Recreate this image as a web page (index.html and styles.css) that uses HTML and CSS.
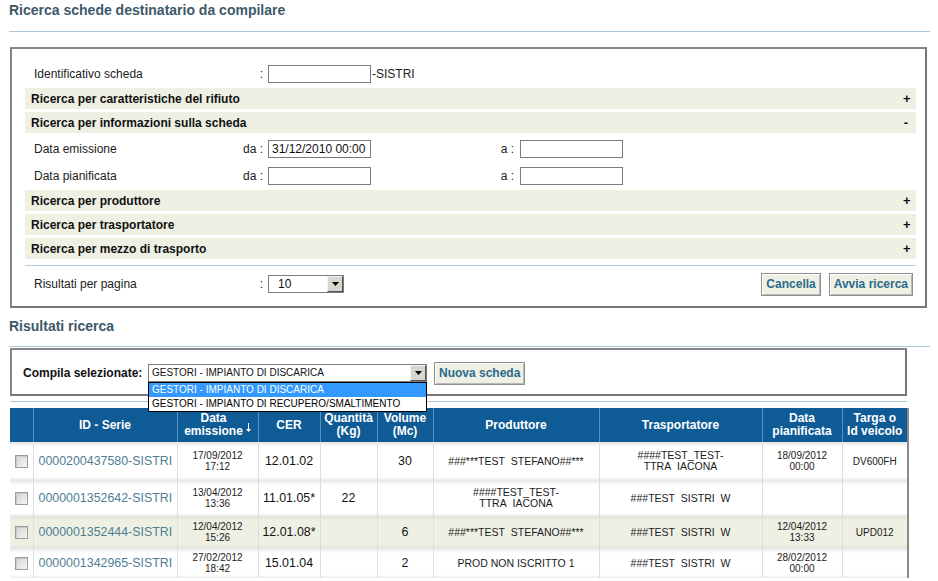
FILE: index.html
```html
<!DOCTYPE html>
<html lang="it">
<head>
<meta charset="utf-8">
<title>Ricerca schede destinatario da compilare</title>
<link rel="stylesheet" href="styles.css">
</head>
<body>
<div class="page">
  <h1 class="title">Ricerca schede destinatario da compilare</h1>
  <div class="rule rule-top"></div>

  <div class="formbox">
    <div class="row row-id">
      <span class="lbl">Identificativo scheda</span><span class="sep">:</span><span class="input"></span><span class="suffix">-SISTRI</span>
    </div>
    <div class="bar"><span>Ricerca per caratteristiche del rifiuto</span><span class="tog">+</span></div>
    <div class="bar"><span>Ricerca per informazioni sulla scheda</span><span class="tog">-</span></div>
    <div class="row row-date first">
      <span class="lbl">Data emissione</span><span class="sep">da :</span><span class="input">31/12/2010 00:00</span><span class="sep sep-a">a :</span><span class="input"></span>
    </div>
    <div class="row row-date">
      <span class="lbl">Data pianificata</span><span class="sep">da :</span><span class="input"></span><span class="sep sep-a">a :</span><span class="input"></span>
    </div>
    <div class="bar"><span>Ricerca per produttore</span><span class="tog">+</span></div>
    <div class="bar"><span>Ricerca per trasportatore</span><span class="tog">+</span></div>
    <div class="bar"><span>Ricerca per mezzo di trasporto</span><span class="tog">+</span></div>
    <div class="divider"></div>
    <div class="row row-bottom">
      <span class="lbl">Risultati per pagina</span><span class="sep">:</span>
      <span class="select select-small"><span class="sel-text">10</span><span class="sel-arrow"><svg width="7" height="4" viewBox="0 0 7 4"><path d="M0 0h7L3.5 4z" fill="#000"/></svg></span></span>
      <span class="buttons"><span class="btn">Cancella</span><span class="btn">Avvia ricerca</span></span>
    </div>
  </div>

  <h2 class="title title-results">Risultati ricerca</h2>
  <div class="rule rule-results"></div>

  <div class="compilebox">
    <span class="compile-lbl">Compila selezionate:</span>
    <span class="select select-wide">
      <span class="sel-text">GESTORI - IMPIANTO DI DISCARICA</span>
      <span class="sel-arrow"><svg width="7" height="4" viewBox="0 0 7 4"><path d="M0 0h7L3.5 4z" fill="#000"/></svg></span>
      <span class="dropdown">
        <span class="opt opt-active">GESTORI - IMPIANTO DI DISCARICA</span>
        <span class="opt">GESTORI - IMPIANTO DI RECUPERO/SMALTIMENTO</span>
      </span>
    </span>
    <span class="btn btn-new">Nuova scheda</span>
  </div>
  <div class="rule rule-table"></div>

  <div class="tablewrap">
    <table class="results">
      <colgroup>
        <col class="c-chk"><col class="c-id"><col class="c-de"><col class="c-cer"><col class="c-q"><col class="c-v"><col class="c-prod"><col class="c-tr"><col class="c-dp"><col class="c-tg">
      </colgroup>
      <thead>
        <tr>
          <th></th>
          <th>ID - Serie</th>
          <th><span class="sorted">Data<br>emissione</span><svg class="sort-ico" width="5" height="9" viewBox="0 0 5 9"><path d="M2 0h1v6h2L2.5 9 0 6h2z" fill="#fff"/></svg></th>
          <th>CER</th>
          <th>Quantità<br>(Kg)</th>
          <th>Volume<br>(Mc)</th>
          <th>Produttore</th>
          <th>Trasportatore</th>
          <th>Data<br>pianificata</th>
          <th>Targa o<br>Id veicolo</th>
        </tr>
      </thead>
      <tbody>
        <tr class="r1">
          <td><span class="chk"></span></td>
          <td class="id">0000200437580-SISTRI</td>
          <td class="small">17/09/2012<br>17:12</td>
          <td class="big">12.01.02</td>
          <td class="big"></td>
          <td class="big">30</td>
          <td class="small wide">###***TEST&nbsp; STEFANO##***</td>
          <td class="small wide">####TEST_TEST-<br>TTRA&nbsp; IACONA</td>
          <td class="small">18/09/2012<br>00:00</td>
          <td class="small">DV600FH</td>
        </tr>
        <tr class="r2">
          <td><span class="chk"></span></td>
          <td class="id">0000001352642-SISTRI</td>
          <td class="small">13/04/2012<br>13:36</td>
          <td class="big">11.01.05*</td>
          <td class="big">22</td>
          <td class="big"></td>
          <td class="small wide">####TEST_TEST-<br>TTRA&nbsp; IACONA</td>
          <td class="small wide">###TEST&nbsp; SISTRI&nbsp; W</td>
          <td class="small"></td>
          <td class="small"></td>
        </tr>
        <tr class="r3 hl">
          <td><span class="chk"></span></td>
          <td class="id">0000001352444-SISTRI</td>
          <td class="small">12/04/2012<br>15:26</td>
          <td class="big">12.01.08*</td>
          <td class="big"></td>
          <td class="big">6</td>
          <td class="small wide">###***TEST&nbsp; STEFANO##***</td>
          <td class="small wide">###TEST&nbsp; SISTRI&nbsp; W</td>
          <td class="small">12/04/2012<br>13:33</td>
          <td class="small">UPD012</td>
        </tr>
        <tr class="r4">
          <td><span class="chk"></span></td>
          <td class="id">0000001342965-SISTRI</td>
          <td class="small">27/02/2012<br>18:42</td>
          <td class="big">15.01.04</td>
          <td class="big"></td>
          <td class="big">2</td>
          <td class="small wide">PROD NON ISCRITTO 1</td>
          <td class="small wide">###TEST&nbsp; SISTRI&nbsp; W</td>
          <td class="small">28/02/2012<br>00:00</td>
          <td class="small"></td>
        </tr>
      </tbody>
    </table>
  </div>
</div>
</body>
</html>
```

FILE: styles.css
```css
* { box-sizing: border-box; }

html, body {
  margin: 0;
  background: #fff;
}

body {
  font-family: "Liberation Sans", Arial, sans-serif;
  font-size: 12px;
  color: #222;
  overflow: hidden;
}

.page {
  width: 938px;
  padding: 2px 0 0 9px;
}

.title {
  margin: 0;
  font-size: 14px;
  line-height: 17px;
  font-weight: bold;
  color: #3d5969;
}

.rule {
  height: 1px;
  background: #a9c8d6;
  width: 921px;
}

.rule-top { margin-top: 12px; }

/* ---------- search form ---------- */
.formbox {
  margin: 15px 0 0 1px;
  width: 917px;
  border: 2px solid #858585;
  border-right-color: #777;
  border-bottom-color: #777;
  padding: 12px 9px 4px 13px;
}

.row {
  display: flex;
  align-items: center;
  padding-left: 9px;
}

.row-id { height: 24px; padding-top: 2px; }

.row-date { height: 27px; }
.row-date.first { margin-top: 2px; }

.lbl {
  width: 196px;
  flex: none;
}

.sep {
  width: 33px;
  flex: none;
  text-align: right;
  margin-right: 5px;
}

.sep-a {
  width: 143px;
  margin-right: 6px;
}

.input {
  width: 103px;
  height: 18px;
  flex: none;
  border: 1px solid #7b7b7b;
  background: #fff;
  padding: 0 0 0 3px;
  line-height: 16px;
  font-size: 12px;
  color: #111;
}

.suffix { margin-left: 1px; }

.bar {
  height: 21px;
  margin-top: 3px;
  background: #eef0e4;
  display: flex;
  align-items: center;
  justify-content: space-between;
  padding: 0 7px 0 6px;
  font-weight: bold;
  color: #111;
}

.row-date + .bar { margin-top: 1px; }

.tog {
  font-size: 13px;
  font-weight: bold;
  width: 6px;
  text-align: center;
}

.divider {
  margin-top: 6px;
  height: 1px;
  background: #b3cdd9;
}

.row-bottom { height: 36px; }

.select {
  position: relative;
  display: flex;
  align-items: center;
  height: 18px;
  border: 1px solid #7b7b7b;
  background: #fff;
  flex: none;
}

.select-small { width: 76px; }

.sel-text {
  flex: 1;
  padding-left: 9px;
  font-size: 12px;
  line-height: 16px;
  color: #111;
}

.sel-arrow {
  width: 16px;
  height: 16px;
  background: #d8d6ce;
  border-top: 1px solid #f4f4f4;
  border-left: 1px solid #f4f4f4;
  border-right: 1px solid #555;
  border-bottom: 1px solid #555;
  display: flex;
  align-items: center;
  justify-content: center;
}

.buttons {
  margin-left: auto;
  display: flex;
  gap: 8px;
  margin-right: 3px;
}

.btn {
  display: inline-flex;
  align-items: center;
  justify-content: center;
  height: 23px;
  padding: 0 4px;
  white-space: nowrap;
  background: #eef0e4;
  border: 1px solid #8f8f8f;
  box-shadow: inset 1px 1px 0 #fff, inset -1px -1px 0 #b9b9b9;
  color: #2b6a8a;
  font-weight: bold;
  font-size: 12px;
}

/* ---------- results ---------- */
.title-results { margin-top: 10px; }

.rule-results { margin-top: 11px; }

.compilebox {
  position: relative;
  z-index: 2;
  margin: 1px 0 0 1px;
  width: 897px;
  height: 48px;
  border: 2px solid #858585;
  border-right-color: #777;
  border-bottom-color: #777;
  display: flex;
  align-items: center;
  padding: 2px 0 0 11px;
}

.compile-lbl {
  width: 125px;
  flex: none;
  font-weight: bold;
  color: #111;
}

.select-wide {
  width: 279px;
  height: 18px;
}

.select-wide .sel-text {
  font-size: 10px;
  padding-left: 3px;
}

.dropdown {
  position: absolute;
  left: -1px;
  top: 17px;
  width: 279px;
  border: 1px solid #000;
  background: #fff;
  display: flex;
  flex-direction: column;
}

.opt {
  height: 14px;
  line-height: 14px;
  font-size: 10px;
  padding-left: 3px;
  color: #000;
  white-space: nowrap;
}

.opt-active {
  background: #3399ff;
  color: #fff;
}

.btn-new {
  margin-left: 7px;
  padding: 0 4px;
}

.rule-table {
  margin-top: 5px;
  margin-left: 1px;
  width: 897px;
}

.tablewrap {
  margin: 6px 0 0 1px;
  width: 899px;
  border-right: 2px solid #8a8a8a;
}

.results {
  width: 897px;
  border-collapse: collapse;
  table-layout: fixed;
}

.c-chk { width: 23px; }
.c-id { width: 144px; }
.c-de { width: 81px; }
.c-cer { width: 62px; }
.c-q { width: 57px; }
.c-v { width: 56px; }
.c-prod { width: 166px; }
.c-tr { width: 163px; }
.c-dp { width: 80px; }
.c-tg { width: 65px; }

.results th {
  height: 34px;
  background: #0f5b96;
  color: #fff;
  font-size: 12px;
  line-height: 13px;
  font-weight: bold;
  text-align: center;
  vertical-align: middle;
  padding: 0;
  border-left: 1px solid #5f90bd;
}

.results th:first-child { border-left: none; }

.sorted { display: inline-block; vertical-align: middle; }

.sort-ico {
  vertical-align: middle;
  margin-left: 3px;
  margin-top: 4px;
}

.results td {
  padding: 0;
  text-align: center;
  vertical-align: middle;
  border-left: 1px solid #d9e0e4;
  background: linear-gradient(to bottom, #e6e6e6 0, #ffffff 5px, #ffffff calc(100% - 3px), #ebebeb 100%);
  color: #111;
}

.results td:first-child { border-left: none; }

.results tr.hl td {
  background: linear-gradient(to bottom, #e2e3dc 0, #eef0e4 5px, #eef0e4 calc(100% - 3px), #e3e4dc 100%);
}

.r1 td { height: 38px; }
.r2 td { height: 36px; }
.r3 td { height: 32px; }
.r4 td { height: 30px; }

.results td.id {
  text-align: left;
  padding-left: 5px;
  color: #4f7d93;
  font-size: 12.4px;
  white-space: nowrap;
}

.results td.small {
  font-size: 10px;
  line-height: 11px;
  color: #1a1a1a;
}

.results td.small.wide {
  font-size: 10.5px;
}

.results td.big {
  font-size: 12.4px;
  color: #111;
}

.chk {
  display: inline-block;
  width: 13px;
  height: 13px;
  vertical-align: middle;
  border: 1px solid #9c9c9c;
  background: linear-gradient(135deg, #d4d4d4 0, #f4f4f4 100%);
  box-shadow: inset 1px 1px 0 #c8c8c8;
}
```
